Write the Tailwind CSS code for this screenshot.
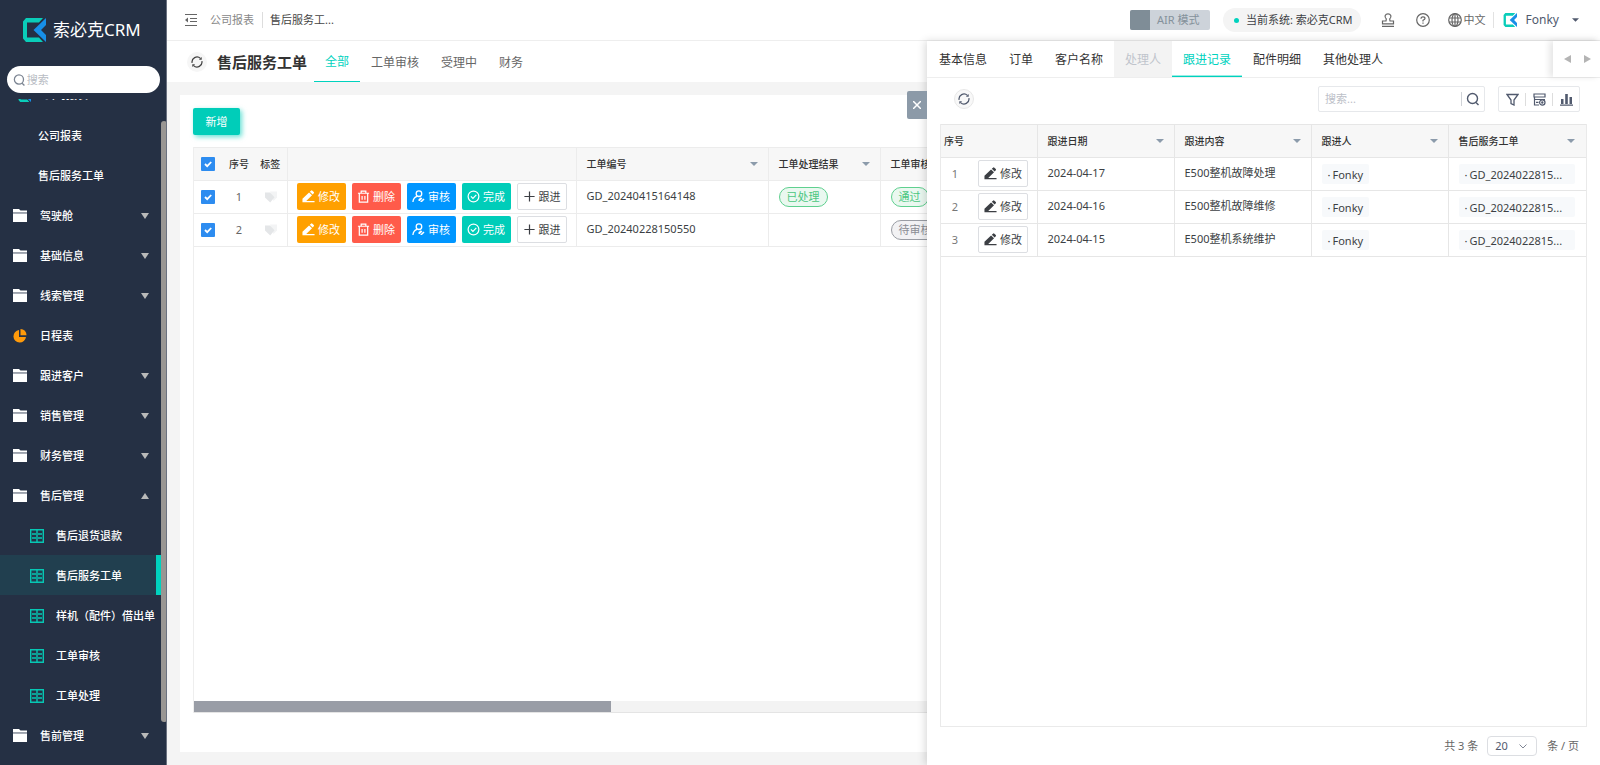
<!DOCTYPE html>
<html lang="zh-CN">
<head>
<meta charset="utf-8">
<title>售后服务工单</title>
<script src="https://cdn.jsdelivr.net/npm/@tailwindcss/browser@4"></script>
</head>
<body class="flex h-screen overflow-hidden bg-[#f4f4f4] font-['Noto_Sans','Noto_Sans_CJK_SC',sans-serif] text-[11px] leading-4 text-[#3c3f44]">
<svg class="hidden" aria-hidden="true">
  <symbol id="logo" viewBox="0 0 24 24"><path fill="#0acdb9" d="M1 3.500 4 0h17l-4 4.500H5v15h12l4 4.500H4l-3-3.500z"/><path fill="#178fe8" d="M24 0v7l-5 5 5 5v7L11.500 12z"/></symbol>
  <symbol id="folder" viewBox="0 0 14 13"><path fill="#fff" d="M0 0h6l1.500 1.500H14v2H0z"/><path fill="#fff" d="M0 5h14v8H0z"/><path fill="#a9aeb8" d="M0 3.500h14V5H0z"/></symbol>
  <symbol id="grid" viewBox="0 0 14 14"><path fill="none" stroke="#06c7b4" stroke-width="1.400" d="M.7.7h12.600v12.600H.7zM7 .7v12.600M2 5h4M8 5h4M2 9h4M8 9h4"/></symbol>
  <symbol id="pie" viewBox="0 0 14 14"><path fill="#ff9a0a" d="M6 1v7h7A6.300 6.300 0 1 1 6 1z"/><path fill="#ff9a0a" d="M7.500 0A6 6 0 0 1 13.500 6.300h-6z"/></symbol>
  <symbol id="down" viewBox="0 0 8 6"><path fill="currentColor" d="M0 0h8L4 6z"/></symbol>
  <symbol id="refresh" viewBox="0 0 14 14"><g fill="none" stroke="currentColor" stroke-width="1.500"><path d="M1.300 8A5.800 5.800 0 0 1 11 2.800M12.700 6A5.800 5.800 0 0 1 3 11.200"/></g><path fill="currentColor" d="M9.200 4.500h3.300V1.200zM4.800 9.500H1.500v3.300z"/></symbol>
  <symbol id="search" viewBox="0 0 14 14"><g fill="none" stroke="currentColor" stroke-width="1.400"><circle cx="6.500" cy="6.500" r="5"/><path d="m10 10.500 2.500 2.500"/></g></symbol>
  <symbol id="pen" viewBox="0 0 14 14"><path fill="currentColor" d="M.5 9.500 7.600 2.600l3.200 3L4.300 12H.5zM8.400 1.900 9.700.7q.8-.6 1.500 0l1.500 1.400q.6.8 0 1.500l-1.200 1.300zM.5 11.800h13v1.500H.5z"/></symbol>
  <symbol id="trash" viewBox="0 0 14 14"><path fill="none" stroke="currentColor" stroke-width="1.300" d="M1 3.500h12M4.500 3V1.200h5V3M2.500 4v9h9V4M5.500 6.500v4M8.500 6.500v4"/></symbol>
  <symbol id="audit" viewBox="0 0 14 14"><g fill="none" stroke="currentColor" stroke-width="1.400"><circle cx="7.500" cy="4" r="3"/><path d="M1 13q.3-5 4.500-6.200"/></g><path fill="currentColor" d="m7 10 2.600-2.300 1.600 1.500-2.700 2.600H7zM9 12.500l3.300-3.300 1.200 1-2.800 2.800H9z"/></symbol>
  <symbol id="done" viewBox="0 0 14 14"><g fill="none" stroke="currentColor" stroke-width="1.300"><circle cx="7" cy="7" r="5.800"/><path d="m4.200 6.800 2.200 2.200 3.600-3.800"/></g></symbol>
  <symbol id="plus" viewBox="0 0 14 14"><path fill="none" stroke="currentColor" stroke-width="1.300" d="M7 1.500v11M1.500 7h11"/></symbol>
  <symbol id="tag" viewBox="0 0 14 12"><path fill="#f3f4f5" d="M6 .5h7v6l-3.500 3.500z"/><path fill="#e4e6e8" d="M1 1.500h5l4.500 4.700L6.200 11.500 1 6.500z"/></symbol>
  <symbol id="caret" viewBox="0 0 8 4"><path fill="currentColor" d="M0 0h8L4 4z"/></symbol>
  <symbol id="tick" viewBox="0 0 14 14"><path fill="none" stroke="#fff" stroke-width="1.800" d="m4 7 2.200 2.200L10.200 5"/></symbol>
</svg>

<aside class="flex w-[167px] shrink-0 flex-col border-r border-[#6a7180] bg-[#253044] text-white">
  <div class="flex h-[60px] shrink-0 items-center gap-[7px] pl-[22px]">
    <svg class="size-6"><use href="#logo"/></svg>
    <span class="text-[17px] leading-6">索必克CRM</span>
  </div>
  <label class="mr-[6px] mt-[6px] ml-[7px] flex h-[27px] shrink-0 items-center rounded-full bg-white pl-[6px] text-[#7b8492]">
    <svg class="size-[14px]"><use href="#search"/></svg>
    <input type="search" aria-label="搜索" placeholder="搜索" class="w-full min-w-0 pl-[1px] outline-none placeholder:text-[#b8bcc3]">
  </label>
  <div class="mt-[6px] flex min-h-0 flex-1 overflow-hidden">
    <nav class="-mt-6 w-[161px] shrink-0 font-medium">
      <a href="#" class="flex h-10 items-center pl-[18px]"><svg class="mr-[13px] size-[13px]"><use href="#logo"/></svg>公司报表</a>
      <a href="#" class="flex h-10 items-center pt-px pl-[38px]">公司报表</a>
      <a href="#" class="flex h-10 items-center pt-px pl-[38px]">售后服务工单</a>
      <a href="#" class="flex h-10 items-center pt-px pr-3 pl-[13px]"><svg class="mr-[13px] h-[13px] w-[14px]"><use href="#folder"/></svg>驾驶舱<svg class="ml-auto h-[6px] w-2 text-[#b9b9b9]"><use href="#down"/></svg></a>
      <a href="#" class="flex h-10 items-center pt-px pr-3 pl-[13px]"><svg class="mr-[13px] h-[13px] w-[14px]"><use href="#folder"/></svg>基础信息<svg class="ml-auto h-[6px] w-2 text-[#b9b9b9]"><use href="#down"/></svg></a>
      <a href="#" class="flex h-10 items-center pt-px pr-3 pl-[13px]"><svg class="mr-[13px] h-[13px] w-[14px]"><use href="#folder"/></svg>线索管理<svg class="ml-auto h-[6px] w-2 text-[#b9b9b9]"><use href="#down"/></svg></a>
      <a href="#" class="flex h-10 items-center pt-px pr-3 pl-[13px]"><svg class="mr-[13px] size-[14px]"><use href="#pie"/></svg>日程表</a>
      <a href="#" class="flex h-10 items-center pt-px pr-3 pl-[13px]"><svg class="mr-[13px] h-[13px] w-[14px]"><use href="#folder"/></svg>跟进客户<svg class="ml-auto h-[6px] w-2 text-[#b9b9b9]"><use href="#down"/></svg></a>
      <a href="#" class="flex h-10 items-center pt-px pr-3 pl-[13px]"><svg class="mr-[13px] h-[13px] w-[14px]"><use href="#folder"/></svg>销售管理<svg class="ml-auto h-[6px] w-2 text-[#b9b9b9]"><use href="#down"/></svg></a>
      <a href="#" class="flex h-10 items-center pt-px pr-3 pl-[13px]"><svg class="mr-[13px] h-[13px] w-[14px]"><use href="#folder"/></svg>财务管理<svg class="ml-auto h-[6px] w-2 text-[#b9b9b9]"><use href="#down"/></svg></a>
      <a href="#" class="flex h-10 items-center pt-px pr-3 pl-[13px]"><svg class="mr-[13px] h-[13px] w-[14px]"><use href="#folder"/></svg>售后管理<svg class="ml-auto h-[6px] w-2 rotate-180 text-[#b9b9b9]"><use href="#down"/></svg></a>
      <a href="#" class="flex h-10 items-center pt-px pl-[30px]"><svg class="mr-3 size-[14px]"><use href="#grid"/></svg>售后退货退款</a>
      <a href="#" class="flex h-10 items-center border-r-[5px] border-[#00d2be] bg-[#213f4f] pt-px pl-[30px]"><svg class="mr-3 size-[14px]"><use href="#grid"/></svg>售后服务工单</a>
      <a href="#" class="flex h-10 items-center pt-px pl-[30px] whitespace-nowrap"><svg class="mr-3 size-[14px] shrink-0"><use href="#grid"/></svg>样机（配件）借出单</a>
      <a href="#" class="flex h-10 items-center pt-px pl-[30px]"><svg class="mr-3 size-[14px]"><use href="#grid"/></svg>工单审核</a>
      <a href="#" class="flex h-10 items-center pt-px pl-[30px]"><svg class="mr-3 size-[14px]"><use href="#grid"/></svg>工单处理</a>
      <a href="#" class="flex h-10 items-center pt-px pr-3 pl-[13px]"><svg class="mr-[13px] h-[13px] w-[14px]"><use href="#folder"/></svg>售前管理<svg class="ml-auto h-[6px] w-2 text-[#b9b9b9]"><use href="#down"/></svg></a>
    </nav>
    <div class="mt-[22px] mb-[43px] w-[6px] shrink-0 rounded-full bg-[#999693]"></div>
  </div>
</aside>

<div class="flex min-w-0 flex-1 flex-col">
  <header class="flex h-[41px] shrink-0 items-center border-b border-[#eee] bg-white pr-[21px] pl-[18px]">
    <button aria-label="收起菜单" class="mr-[13px] text-[#666]"><svg class="block size-3" viewBox="0 0 12 12"><path fill="none" stroke="currentColor" d="M0 .5h12M5 4.500h7M5 7.500h7M0 11.500h12"/><path fill="currentColor" d="M0 6l3-2.500v5z"/></svg></button>
    <a href="#" class="mr-[7px] border-r border-[#ddd] pr-2 text-[#888]">公司报表</a>
    <a href="#" class="text-[#444]">售后服务工...</a>
    <button role="switch" aria-checked="false" class="mr-[13px] ml-auto flex h-5 w-20 items-center gap-[7px] rounded-xs bg-[#cdd3da] text-[#84919b]"><span class="h-5 w-5 rounded-l-xs bg-[#7f8d97]"></span>AIR 模式</button>
    <span class="mr-[20px] flex h-6 items-center gap-[7px] rounded-full bg-[#f4f4f4] pr-2 pl-[11px]"><i class="size-[5px] rounded-full bg-[#00d2be]"></i>当前系统: 索必克CRM</span>
    <button aria-label="印章" class="mr-[21px] text-[#666]"><svg class="block size-[14px]" viewBox="0 0 14 14" fill="none" stroke="currentColor" stroke-width="1.200"><path d="M5 8 5.300 6Q3.500 4.500 4.200 2.500 5 .8 7 .8t2.800 1.700Q10.500 4.500 8.700 6L9 8h3.500v2.800h-11V8zM1 13.300h12"/></svg></button>
    <button aria-label="帮助" class="mr-[18px] text-[#666]"><svg class="block size-[14px]" viewBox="0 0 14 14" fill="none" stroke="currentColor" stroke-width="1.200"><circle cx="7" cy="7" r="6.300"/><path d="M5 5.700Q5 3.800 7 3.800t2 1.700Q9 6.500 7 7.300v1.200M7 9.500v1.200"/></svg></button>
    <button class="mr-[7px] flex items-center gap-[2px] text-[#666]"><svg class="size-[14px]" viewBox="0 0 14 14" fill="none" stroke="currentColor" stroke-width="1.200"><circle cx="7" cy="7" r="6.300"/><ellipse cx="7" cy="7" rx="3" ry="6.300"/><path d="M7 .7v12.600M1 5h12M1 9h12"/></svg>中文</button>
    <button class="flex items-center border-l border-[#e2e2e2] pl-[9px] text-xs text-[#515a6e]"><svg class="mr-[9px] size-[14px]"><use href="#logo"/></svg>Fonky<svg class="ml-[13px] h-1 w-[7px]"><use href="#caret"/></svg></button>
  </header>

  <div class="relative flex min-h-0 flex-1">
    <main class="flex min-w-0 flex-1 flex-col">
      <div class="flex h-[41px] shrink-0 items-center bg-white pl-5">
        <button aria-label="刷新" class="mr-[10px] flex size-5 items-center justify-center rounded-full bg-[#f6f6f6] text-[#444]"><svg class="size-3"><use href="#refresh"/></svg></button>
        <h1 class="mr-[7px] text-[15px] font-bold text-[#333]">售后服务工单</h1>
        <nav class="flex h-full text-xs text-[#666]">
          <a href="#" class="flex items-center border-b border-[#00d2be] px-[11px] pt-[2px] text-[#00d2be]">全部</a>
          <a href="#" class="flex items-center px-[11px] pt-[2px]">工单审核</a>
          <a href="#" class="flex items-center px-[11px] pt-[2px]">受理中</a>
          <a href="#" class="flex items-center px-[11px] pt-[2px]">财务</a>
        </nav>
      </div>
      <section class="mx-[13px] mt-[13px] mb-[13px] flex min-h-0 flex-1 flex-col overflow-hidden bg-white pt-[13px] pb-[39px] pl-[13px]">
        <button class="h-[27px] w-[47px] shrink-0 rounded-xs bg-[#00cdb9] text-white shadow-[2px_2px_5px_#00cdb999]">新增</button>
        <div class="mt-3 flex min-h-0 flex-1 flex-col overflow-hidden border-l border-[#eee]">
          <table class="w-[1500px] table-fixed border-collapse text-left">
            <colgroup><col class="w-[30px]"><col class="w-[30px]"><col class="w-[33px]"><col class="w-[289px]"><col class="w-[192px]"><col class="w-[112px]"><col></colgroup>
            <thead class="text-[10px] text-[#333]">
              <tr class="h-[33px] border-y border-[#ececec] bg-[#f7f7f7]">
                <th class="pl-[7px] font-medium"><span class="grid size-[14px]"><input type="checkbox" checked aria-label="全选" class="col-start-1 row-start-1 size-[14px] appearance-none rounded-[1px] bg-[#2d8cf0]"><svg class="pointer-events-none col-start-1 row-start-1 size-[14px]"><use href="#tick"/></svg></span></th>
                <th class="text-center font-medium">序号</th>
                <th class="border-r border-[#ececec] text-center font-medium">标签</th>
                <th class="border-r border-[#ececec]"></th>
                <th class="border-r border-[#ececec] px-[10px] font-medium"><div class="flex items-center justify-between">工单编号<svg class="h-1 w-2 text-[#8c9bab]"><use href="#caret"/></svg></div></th>
                <th class="border-r border-[#ececec] px-[10px] font-medium"><div class="flex items-center justify-between">工单处理结果<svg class="h-1 w-2 text-[#8c9bab]"><use href="#caret"/></svg></div></th>
                <th class="px-[10px] font-medium">工单审核结果</th>
              </tr>
            </thead>
            <tbody>
              <tr class="h-[33px] border-b border-[#ececec]">
                <td class="pl-[7px]"><span class="grid size-[14px]"><input type="checkbox" checked aria-label="选择 1" class="col-start-1 row-start-1 size-[14px] appearance-none rounded-[1px] bg-[#2d8cf0]"><svg class="pointer-events-none col-start-1 row-start-1 size-[14px]"><use href="#tick"/></svg></span></td>
                <td class="text-center text-[#666]">1</td>
                <td class="border-r border-[#ececec] pl-[10px]"><svg class="h-3 w-[14px]"><use href="#tag"/></svg></td>
                <td class="border-r border-[#ececec] pb-px pl-[9px]"><div class="flex gap-[6px]">
                  <button class="flex h-[27px] w-[49px] items-center justify-center gap-[3px] rounded-xs bg-[#ffa000] text-white"><svg class="size-[13px]"><use href="#pen"/></svg>修改</button>
                  <button class="flex h-[27px] w-[49px] items-center justify-center gap-[3px] rounded-xs bg-[#ff5b4a] text-white"><svg class="size-[13px]"><use href="#trash"/></svg>删除</button>
                  <button class="flex h-[27px] w-[49px] items-center justify-center gap-[3px] rounded-xs bg-[#0096ff] text-white"><svg class="size-[13px]"><use href="#audit"/></svg>审核</button>
                  <button class="flex h-[27px] w-[49px] items-center justify-center gap-[3px] rounded-xs bg-[#00cdb9] text-white"><svg class="size-[13px]"><use href="#done"/></svg>完成</button>
                  <button class="flex h-[27px] w-[50px] items-center justify-center gap-[3px] rounded-xs border border-[#dcdee2]"><svg class="size-[13px]"><use href="#plus"/></svg>跟进</button>
                </div></td>
                <td class="border-r border-[#ececec] px-[10px] pb-[2px]">GD_20240415164148</td>
                <td class="border-r border-[#ececec] px-[10px]"><span class="inline-flex h-5 items-center rounded-full border border-[#5fd08f] bg-[#eaf8f0] px-[7px] text-[#4cc780]">已处理</span></td>
                <td class="px-[10px]"><span class="inline-flex h-5 items-center rounded-full border border-[#5fd08f] bg-[#eaf8f0] px-[7px] text-[#4cc780]">通过</span></td>
              </tr>
              <tr class="h-[33px] border-b border-[#ececec]">
                <td class="pl-[7px]"><span class="grid size-[14px]"><input type="checkbox" checked aria-label="选择 2" class="col-start-1 row-start-1 size-[14px] appearance-none rounded-[1px] bg-[#2d8cf0]"><svg class="pointer-events-none col-start-1 row-start-1 size-[14px]"><use href="#tick"/></svg></span></td>
                <td class="text-center text-[#666]">2</td>
                <td class="border-r border-[#ececec] pl-[10px]"><svg class="h-3 w-[14px]"><use href="#tag"/></svg></td>
                <td class="border-r border-[#ececec] pb-px pl-[9px]"><div class="flex gap-[6px]">
                  <button class="flex h-[27px] w-[49px] items-center justify-center gap-[3px] rounded-xs bg-[#ffa000] text-white"><svg class="size-[13px]"><use href="#pen"/></svg>修改</button>
                  <button class="flex h-[27px] w-[49px] items-center justify-center gap-[3px] rounded-xs bg-[#ff5b4a] text-white"><svg class="size-[13px]"><use href="#trash"/></svg>删除</button>
                  <button class="flex h-[27px] w-[49px] items-center justify-center gap-[3px] rounded-xs bg-[#0096ff] text-white"><svg class="size-[13px]"><use href="#audit"/></svg>审核</button>
                  <button class="flex h-[27px] w-[49px] items-center justify-center gap-[3px] rounded-xs bg-[#00cdb9] text-white"><svg class="size-[13px]"><use href="#done"/></svg>完成</button>
                  <button class="flex h-[27px] w-[50px] items-center justify-center gap-[3px] rounded-xs border border-[#dcdee2]"><svg class="size-[13px]"><use href="#plus"/></svg>跟进</button>
                </div></td>
                <td class="border-r border-[#ececec] px-[10px] pb-[2px]">GD_20240228150550</td>
                <td class="border-r border-[#ececec]"></td>
                <td class="px-[10px]"><span class="inline-flex h-5 items-center rounded-full border border-[#9a9da4] bg-[#f2f2f4] px-[7px] text-[#8a8d94]">待审核</span></td>
              </tr>
            </tbody>
          </table>
          <div class="mt-auto h-3 border-b border-[#e4e4e4] bg-[#f3f3f3]"><div class="h-full w-[417px] bg-[#999da6]"></div></div>
        </div>
      </section>
    </main>

    <aside class="absolute inset-y-0 right-0 flex w-[673px] flex-col bg-white shadow-[-2px_0_8px_#00000026]">
      <button aria-label="关闭" class="absolute top-[50px] -left-5 flex h-[28px] w-5 items-center justify-center rounded-l-xs bg-[#8c9aa8] text-white"><svg class="size-2" viewBox="0 0 8 8"><path stroke="currentColor" stroke-width="1.500" d="m0 0 8 8M8 0 0 8"/></svg></button>
      <div class="flex h-[37px] shrink-0 border-b border-[#eee]">
        <nav class="flex flex-1 overflow-hidden pl-px text-xs text-[#333]">
          <a href="#" class="flex items-center px-[11px] pt-[2px]">基本信息</a>
          <a href="#" class="flex items-center px-[11px] pt-[2px]">订单</a>
          <a href="#" class="flex items-center px-[11px] pt-[2px]">客户名称</a>
          <a href="#" aria-disabled="true" class="flex items-center bg-[#f3f3f3] px-[11px] pt-[2px] text-[#c0c4cc]">处理人</a>
          <a href="#" class="flex items-center border-b border-[#00d2be] px-[11px] pt-[2px] text-[#00d2be] shadow-[inset_0_-1px_0_#00d2be66]">跟进记录</a>
          <a href="#" class="flex items-center px-[11px] pt-[2px]">配件明细</a>
          <a href="#" class="flex items-center px-[11px] pt-[2px]">其他处理人</a>
        </nav>
        <div class="flex w-[47px] items-center justify-between pr-[9px] pl-[11px] text-[#b4b4b4] shadow-[-4px_0_6px_#00000018]">
          <button aria-label="向左"><svg class="block h-2 w-[7px]" viewBox="0 0 7 8"><path fill="currentColor" d="M7 0v8L0 4z"/></svg></button>
          <button aria-label="向右"><svg class="block h-2 w-[7px]" viewBox="0 0 7 8"><path fill="currentColor" d="M0 0v8l7-4z"/></svg></button>
        </div>
      </div>
      <div class="flex min-h-0 flex-1 flex-col px-[13px]">
        <div class="flex h-[46px] shrink-0 items-center pr-[7px] pl-[14px]">
          <button aria-label="刷新" class="mb-[5px] flex size-5 items-center justify-center rounded-full border border-[#e8e8e8] bg-[#f8f8f8] text-[#515a6e]"><svg class="size-3"><use href="#refresh"/></svg></button>
          <div class="mb-1 ml-auto flex h-[26px] w-[167px] items-center rounded-xs border border-[#e6e8eb]">
            <input type="search" aria-label="搜索记录" placeholder="搜索..." class="min-w-0 flex-1 pl-[6px] outline-none placeholder:text-[#bcc0c8]">
            <button aria-label="搜索" class="border-l border-[#d0d3d8] px-[4px] text-[#515a6e]"><svg class="block size-[14px]"><use href="#search"/></svg></button>
          </div>
          <div class="mb-1 ml-[13px] flex h-[26px] w-[82px] items-center rounded-xs border border-[#e6e8eb] text-[#515a6e]">
            <button aria-label="筛选" class="flex flex-1 justify-center"><svg class="size-[13px]" viewBox="0 0 13 13"><path fill="none" stroke="currentColor" stroke-width="1.300" d="M1 1.500h11L8 7v5L5 10.500V7z"/></svg></button>
            <button aria-label="列设置" class="flex flex-1 justify-center border-x border-[#ddd]"><svg class="size-[13px]" viewBox="0 0 13 13" fill="none" stroke="currentColor" stroke-width="1.200"><path d="M1 1h11v3H1zM1.500 4v8H6M1.500 6.500H12M3 9.300h2.500"/><circle cx="9.300" cy="9.500" r="2.700"/><circle cx="9.300" cy="9.500" r=".6"/></svg></button>
            <button aria-label="图表" class="flex flex-1 justify-center"><svg class="size-[13px]" viewBox="0 0 13 13"><path fill="currentColor" d="M1 6h2.500v5H1zM5.200 1h2.600v10H5.200zM9.500 4H12v7H9.500zM0 11.500h13v1.200H0z"/></svg></button>
          </div>
        </div>
        <div class="min-h-0 flex-1 overflow-hidden border-x border-b border-[#eaeaea]">
          <table class="w-full table-fixed border-collapse text-left">
            <colgroup><col class="w-[28px]"><col class="w-[68px]"><col class="w-[137px]"><col class="w-[137px]"><col class="w-[137px]"><col></colgroup>
            <thead class="text-[10px] text-[#333]">
              <tr class="h-[33px] border-y border-[#e6e6e6] bg-[#f7f7f7]">
                <th class="pl-[3px] font-medium whitespace-nowrap">序号</th>
                <th class="border-r border-[#e6e6e6]"></th>
                <th class="border-r border-[#e6e6e6] px-[10px] font-medium"><div class="flex items-center justify-between">跟进日期<svg class="h-1 w-2 text-[#8c9bab]"><use href="#caret"/></svg></div></th>
                <th class="border-r border-[#e6e6e6] px-[10px] font-medium"><div class="flex items-center justify-between">跟进内容<svg class="h-1 w-2 text-[#8c9bab]"><use href="#caret"/></svg></div></th>
                <th class="border-r border-[#e6e6e6] px-[10px] font-medium"><div class="flex items-center justify-between">跟进人<svg class="h-1 w-2 text-[#8c9bab]"><use href="#caret"/></svg></div></th>
                <th class="pr-[11px] pl-[10px] font-medium"><div class="flex items-center justify-between">售后服务工单<svg class="h-1 w-2 text-[#8c9bab]"><use href="#caret"/></svg></div></th>
              </tr>
            </thead>
            <tbody>
              <tr class="h-[33px] border-b border-[#e6e6e6]">
                <td class="text-center text-[#777]">1</td>
                <td class="border-r border-[#e6e6e6] pb-px pl-[9px]"><button class="flex h-[27px] w-[50px] items-center justify-center gap-[3px] rounded-xs border border-[#dcdee2]"><svg class="size-[13px]"><use href="#pen"/></svg>修改</button></td>
                <td class="border-r border-[#e6e6e6] px-[10px] pb-[3px]">2024-04-17</td>
                <td class="border-r border-[#e6e6e6] px-[10px] pb-[3px]">E500整机故障处理</td>
                <td class="border-r border-[#e6e6e6] px-[10px]"><span class="inline-flex h-5 items-center rounded-xs bg-[#f7f9fb] px-[6px] pt-[2px]"><span class="w-[5px]">·</span>Fonky</span></td>
                <td class="px-[10px]"><span class="flex h-5 w-[116px] items-center rounded-xs bg-[#f7f9fb] px-[6px] pt-[2px]"><span class="w-[5px]">·</span>GD_2024022815...</span></td>
              </tr>
              <tr class="h-[33px] border-b border-[#e6e6e6]">
                <td class="text-center text-[#777]">2</td>
                <td class="border-r border-[#e6e6e6] pb-px pl-[9px]"><button class="flex h-[27px] w-[50px] items-center justify-center gap-[3px] rounded-xs border border-[#dcdee2]"><svg class="size-[13px]"><use href="#pen"/></svg>修改</button></td>
                <td class="border-r border-[#e6e6e6] px-[10px] pb-[3px]">2024-04-16</td>
                <td class="border-r border-[#e6e6e6] px-[10px] pb-[3px]">E500整机故障维修</td>
                <td class="border-r border-[#e6e6e6] px-[10px]"><span class="inline-flex h-5 items-center rounded-xs bg-[#f7f9fb] px-[6px] pt-[2px]"><span class="w-[5px]">·</span>Fonky</span></td>
                <td class="px-[10px]"><span class="flex h-5 w-[116px] items-center rounded-xs bg-[#f7f9fb] px-[6px] pt-[2px]"><span class="w-[5px]">·</span>GD_2024022815...</span></td>
              </tr>
              <tr class="h-[33px] border-b border-[#e6e6e6]">
                <td class="text-center text-[#777]">3</td>
                <td class="border-r border-[#e6e6e6] pb-px pl-[9px]"><button class="flex h-[27px] w-[50px] items-center justify-center gap-[3px] rounded-xs border border-[#dcdee2]"><svg class="size-[13px]"><use href="#pen"/></svg>修改</button></td>
                <td class="border-r border-[#e6e6e6] px-[10px] pb-[3px]">2024-04-15</td>
                <td class="border-r border-[#e6e6e6] px-[10px] pb-[3px]">E500整机系统维护</td>
                <td class="border-r border-[#e6e6e6] px-[10px]"><span class="inline-flex h-5 items-center rounded-xs bg-[#f7f9fb] px-[6px] pt-[2px]"><span class="w-[5px]">·</span>Fonky</span></td>
                <td class="px-[10px]"><span class="flex h-5 w-[116px] items-center rounded-xs bg-[#f7f9fb] px-[6px] pt-[2px]"><span class="w-[5px]">·</span>GD_2024022815...</span></td>
              </tr>
            </tbody>
          </table>
        </div>
        <footer class="flex h-[38px] shrink-0 items-center justify-end pr-2 text-[#666]">
          共 3 条
          <label class="flex items-center">
            <span class="relative mr-[10px] ml-[9px] flex items-center">
              <select class="h-5 w-[50px] appearance-none rounded-sm border border-[#dcdee2] pl-[7px] leading-4 text-[#515a6e]"><option>20</option></select>
              <svg class="pointer-events-none absolute right-[10px] h-[5px] w-2" viewBox="0 0 8 5"><path fill="none" stroke="#808695" d="m.5.5 3.500 3.500L7.500.5"/></svg>
            </span>
            条 / 页
          </label>
        </footer>
      </div>
    </aside>
  </div>
</div>
</body>
</html>
